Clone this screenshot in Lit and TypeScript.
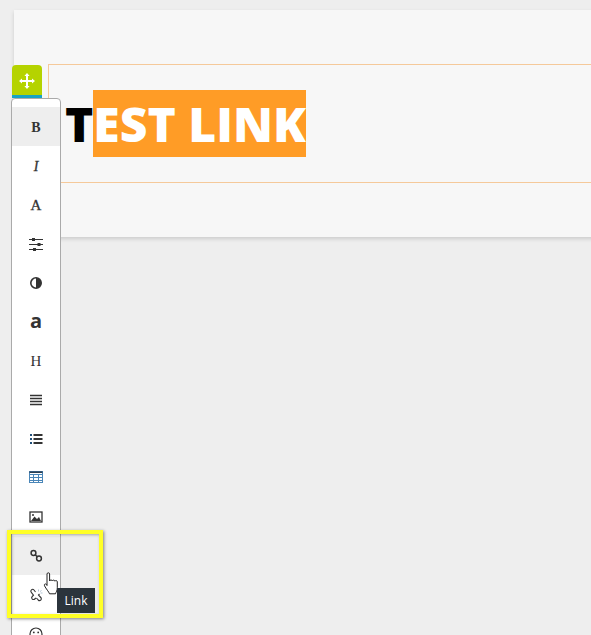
import { LitElement, html, css, svg } from "lit";
import { customElement } from "lit/decorators.js";

const items = [
  { k: "t", label: "B", cls: "b", active: true },
  { k: "t", label: "I", cls: "i" },
  { k: "t", label: "A", cls: "a" },
  { k: "s", icon: svg`<path d="M1 3.500h14M1 8.500h14M1 13.500h14" stroke="#333" stroke-width="1" fill="none"/><rect x="4" y="2" width="3" height="3" fill="#333"/><rect x="9.500" y="7" width="3" height="3" fill="#333"/><rect x="5" y="12" width="3" height="3" fill="#333"/>` },
  { k: "s", icon: svg`<circle cx="8" cy="8" r="5.200" fill="#fff" stroke="#333" stroke-width="1.600"/><path d="M8 2.800a5.200 5.200 0 0 1 0 10.400z" fill="#333"/>` },
  { k: "t", label: "a", cls: "big" },
  { k: "t", label: "H", cls: "h" },
  { k: "s", icon: svg`<path d="M2 3.500h12M2 6.500h12M2 9.500h12M2 12.500h12" stroke="#333" stroke-width="1.600"/>` },
  { k: "s", icon: svg`<path d="M5.500 4h9M5.500 8h9M5.500 12h9" stroke="#333" stroke-width="1.800"/><path d="M2 4h2M2 8h2M2 12h2" stroke="#1f4e79" stroke-width="2"/>` },
  { k: "s", icon: svg`<rect x="1.500" y="1.500" width="13" height="11" fill="#fff" stroke="#4a86b8"/><path d="M1.500 4.500h13M1.500 7.500h13M1.500 10.500h13M5.500 4.500v8M10.500 4.500v8" stroke="#4a86b8"/><path d="M1.500 2.200h13" stroke="#2c3e50" stroke-width="1.600"/>` },
  { k: "s", icon: svg`<rect x="2" y="3" width="12" height="10" fill="#fff" stroke="#333" stroke-width="1.300"/><path d="M3 12l3.500-4.500 2.500 2.500 2-2 2 4z" fill="#333"/><circle cx="5" cy="6" r="1" fill="#333"/>` },
  { k: "s", active: true, icon: svg`<circle cx="5.500" cy="5" r="2.400" fill="none" stroke="#333" stroke-width="1.500"/><circle cx="11" cy="10.500" r="2.400" fill="none" stroke="#333" stroke-width="1.500"/><path d="M7.200 6.700l2.100 2.100" stroke="#333" stroke-width="1.500"/>` },
  { k: "s", icon: svg`<path d="M7.500 5L6 3a1.800 1.800 0 0 0-2.700 2.400l2.200 2.800-1.300 1.300a1.800 1.800 0 0 0 2.600 2.500L8 10.800M8.500 11l1.700 2a1.800 1.800 0 0 0 2.600-2.500L10.500 8l1-1" fill="none" stroke="#333" stroke-width="1.100"/><path d="M10.500 2.500v2M12 4.500l1.500-1M12.500 6h2" stroke="#9db4c6" stroke-width=".8"/>` },
  { k: "s", icon: svg`<circle cx="8" cy="8" r="6" fill="none" stroke="#333" stroke-width="1.200"/><circle cx="5.800" cy="6.400" r=".9" fill="#333"/><circle cx="10.200" cy="6.400" r=".9" fill="#333"/><path d="M5 10.200c1.600 1.600 4.400 1.600 6 0" fill="none" stroke="#333"/>` },
];

@customElement("app-root")
export class AppRoot extends LitElement {
  static styles = css`
    :host {
      display: block;
      position: relative;
      width: 591px;
      height: 635px;
      overflow: hidden;
      background: #eeeeee;
      box-sizing: border-box;
      padding: 10px 0 0 14px;
      font-family: "Liberation Serif", serif;
    }
    .card {
      background: #f7f7f7;
      height: 227px;
      box-sizing: border-box;
      padding: 54px 0 0 34px;
      box-shadow: 0 2px 4px rgba(0, 0, 0, 0.14);
      margin-right: -10px;
    }
    .frame {
      height: 119px;
      border: 1px solid #f5c99a;
      border-right: none;
      box-sizing: border-box;
      padding: 25px 0 0 16px;
      font-family: "Open Sans", sans-serif;
      font-weight: 800;
      font-size: 48px;
      line-height: 67px;
      color: #000;
      white-space: nowrap;
    }
    .sel {
      background: #ff9c26;
      color: #fff;
      padding: 1px 0;
    }
    .handle {
      position: absolute;
      left: 12px;
      top: 65px;
      width: 30px;
      height: 33px;
      box-sizing: border-box;
      background: #b5d300;
      border-bottom: 3px solid #17a3c4;
      border-radius: 4px 4px 0 0;
      padding-top: 1px;
      display: flex;
      align-items: center;
      justify-content: center;
    }
    .bar {
      position: absolute;
      left: 11px;
      top: 98px;
      width: 50px;
      height: 560px;
      box-sizing: border-box;
      background: #fff;
      border: 1px solid #aaaaaa;
      border-radius: 4px;
      padding-top: 8px;
    }
    .item {
      height: 39px;
      display: flex;
      align-items: center;
      justify-content: center;
      color: #333;
      font-size: 14px;
    }
    .item.active {
      background: #eeeeee;
    }
    .item svg {
      display: block;
    }
    .b, .i, .a, .h { position: relative; top: 1px; }
    .b { font-weight: 700; }
    .i { font-style: italic; font-weight: 400; -webkit-text-stroke: 0.3px #333; }
    .a { font-weight: 400; font-size: 15px; -webkit-text-stroke: 0.3px #333; }
    .h { font-size: 15px; color: #333; }
    .big {
      font-family: "Open Sans", sans-serif;
      font-weight: 700;
      font-size: 20px;
      position: relative;
      top: -1px;
    }
    .mark {
      position: absolute;
      left: 7px;
      top: 530px;
      width: 96px;
      height: 88px;
      box-sizing: border-box;
      border: 4px solid #ffff26;
      box-shadow: 1px 1px 3px rgba(0, 0, 0, 0.45),
        inset 1px 1px 3px rgba(0, 0, 0, 0.3);
    }
    .tip {
      position: absolute;
      left: 57px;
      top: 588px;
      width: 38px;
      height: 25px;
      background: #2b343c;
      color: #fff;
      font-family: "Open Sans", sans-serif;
      font-size: 12px;
      display: flex;
      align-items: center;
      justify-content: center;
    }
    .hand {
      position: absolute;
      left: 43px;
      top: 572px;
    }
  `;

  render() {
    return html`
      <div class="card">
        <div class="frame">T<span class="sel">EST LINK</span></div>
      </div>
      <div class="handle">
        <svg width="16" height="16" viewBox="0 0 16 16">
          <path d="M8 0l2.600 3H9v4h4V5.400L16 8l-3 2.600V9H9v4h1.600L8 16l-2.600-3H7V9H3v1.600L0 8l3-2.600V7h4V3H5.400z" fill="#fff"/>
        </svg>
      </div>
      <div class="bar">
        ${items.map(
          (it) => html`<div class="item ${it.active ? "active" : ""}">
            ${it.k === "t"
              ? html`<span class=${it.cls ?? ""}>${it.label}</span>`
              : html`<svg width="16" height="16" viewBox="0 0 16 16">${it.icon}</svg>`}
          </div>`
        )}
      </div>
      <div class="mark"></div>
      <svg class="hand" width="18" height="26" viewBox="0 0 18 26">
        <path d="M4 2c0-1.600 2.600-1.600 2.600 0v7c.3-1.400 2.500-1.400 2.700 0 .3-1.200 2.400-1.200 2.600.2.400-1 2.300-.9 2.400.6v6c0 3-1.200 4-1.800 6H6.500c-.6-2-3.500-5-5-8-.7-1.500.9-2.500 2-1.400L4 13.500z" fill="#fff" stroke="#222" stroke-width="1"/>
      </svg>
      <div class="tip">Link</div>
    `;
  }
}
